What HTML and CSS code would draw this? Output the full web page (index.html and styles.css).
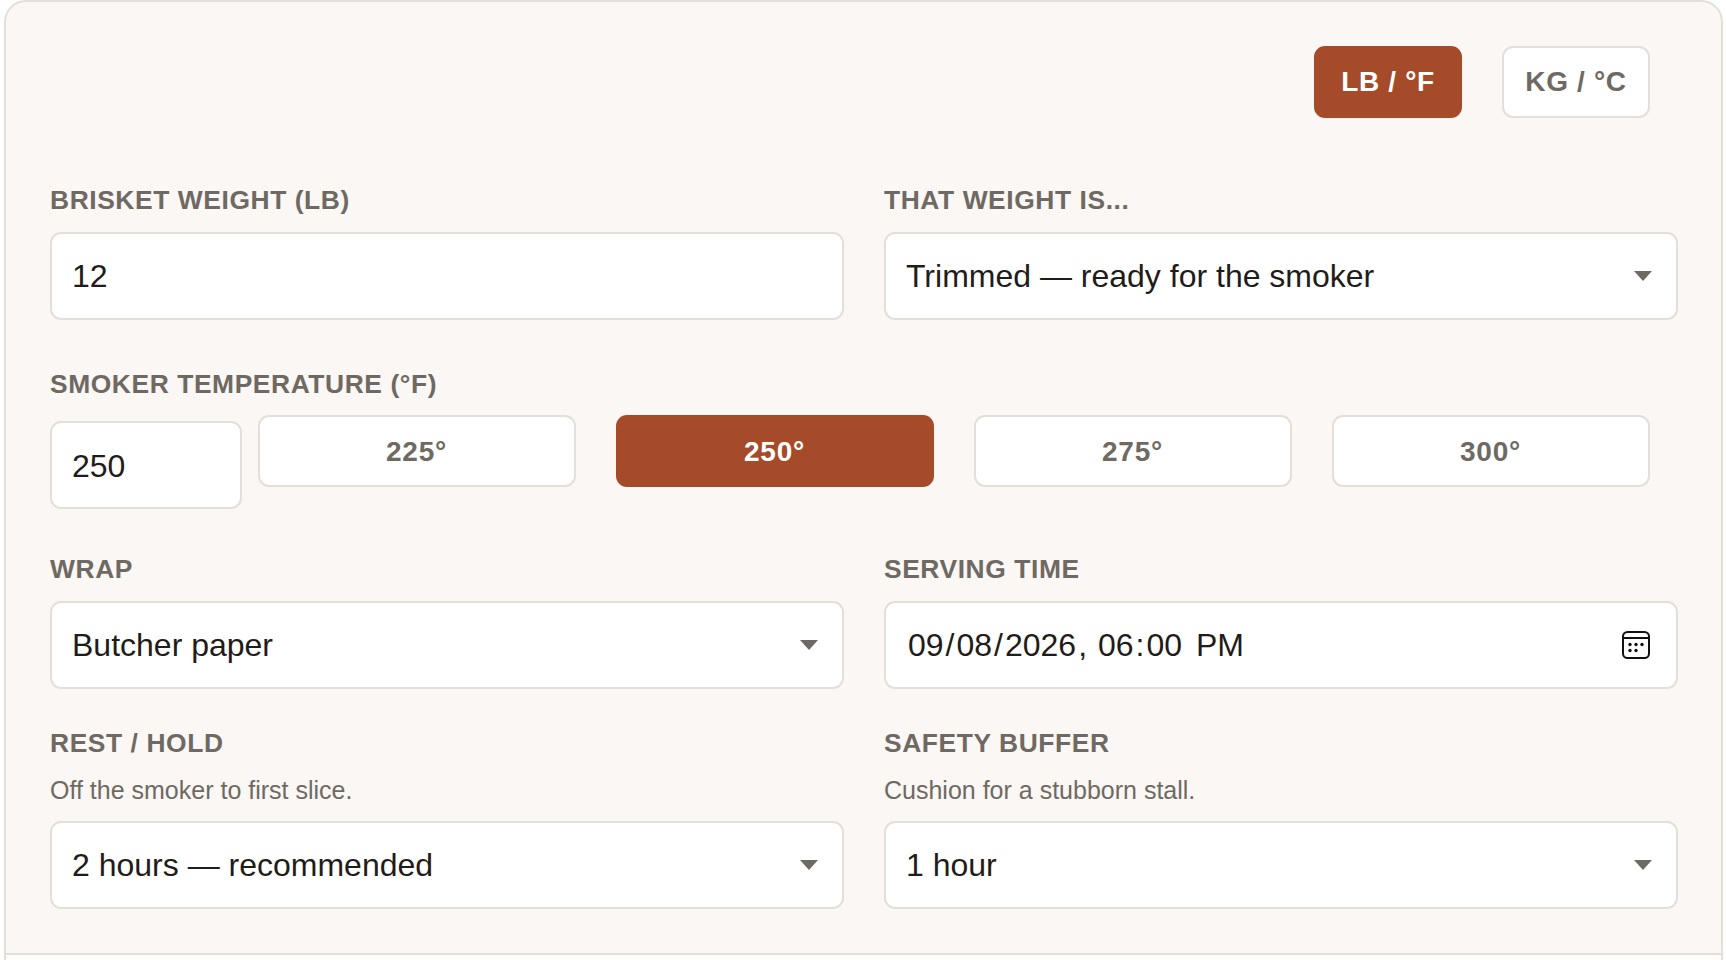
FILE: index.html
```html
<!DOCTYPE html>
<html lang="en">
<head>
<meta charset="utf-8">
<title>Brisket planner</title>
<link rel="stylesheet" href="styles.css">
</head>
<body>
<main class="card">
  <div class="form">
    <div class="units">
      <button class="pill pill-on">LB / °F</button>
      <button class="pill">KG / °C</button>
    </div>
    <div class="row row-first">
      <div class="field">
        <label class="label">BRISKET WEIGHT (LB)</label>
        <input class="control" type="text" value="12">
      </div>
      <div class="field">
        <label class="label">THAT WEIGHT IS...</label>
        <div class="select-wrap">
          <select class="control"><option>Trimmed — ready for the smoker</option></select>
          <span class="caret"></span>
        </div>
      </div>
    </div>
    <div class="temp">
      <label class="label">SMOKER TEMPERATURE (°F)</label>
      <div class="temp-row">
        <input class="control temp-input" type="text" value="250">
        <div class="chips">
          <button class="chip">225°</button>
          <button class="chip chip-on">250°</button>
          <button class="chip">275°</button>
          <button class="chip">300°</button>
        </div>
      </div>
    </div>
    <div class="row row-wrap">
      <div class="field">
        <label class="label">WRAP</label>
        <div class="select-wrap">
          <select class="control"><option>Butcher paper</option></select>
          <span class="caret"></span>
        </div>
      </div>
      <div class="field">
        <label class="label">SERVING TIME</label>
        <div class="select-wrap">
          <input class="control date" type="datetime-local" value="2026-09-08T18:00">
          <svg class="cal" viewBox="0 0 28 28" fill="none">
            <rect x="1" y="1" width="26" height="26" rx="4.5" stroke="#111" stroke-width="2"/>
            <path d="M1.5 7h25" stroke="#111" stroke-width="2"/>
            <g fill="#111"><circle cx="8" cy="13.5" r="1.7"/><circle cx="14" cy="13.5" r="1.7"/><circle cx="20" cy="13.5" r="1.7"/><circle cx="8" cy="19.5" r="1.7"/><circle cx="14" cy="19.5" r="1.7"/></g>
          </svg>
        </div>
      </div>
    </div>
    <div class="row row-rest">
      <div class="field">
        <label class="label">REST / HOLD</label>
        <p class="hint">Off the smoker to first slice.</p>
        <div class="select-wrap">
          <select class="control"><option>2 hours — recommended</option></select>
          <span class="caret"></span>
        </div>
      </div>
      <div class="field">
        <label class="label">SAFETY BUFFER</label>
        <p class="hint">Cushion for a stubborn stall.</p>
        <div class="select-wrap">
          <select class="control"><option>1 hour</option></select>
          <span class="caret"></span>
        </div>
      </div>
    </div>
  </div>
  <div class="below"></div>
</main>
</body>
</html>
```
FILE: styles.css
```css
* { box-sizing: border-box; }
html, body { height: 100%; }
body {
  margin: 0;
  padding: 0 3px 0 4px;
  background: #fff;
  font-family: "Liberation Sans", Arial, sans-serif;
  overflow: hidden;
}
.card {
  height: 980px;
  background: #fbf7f4;
  border: 2px solid #e4dfd8;
  border-radius: 22px;
  overflow: hidden;
}
.form {
  height: 951px;
  padding: 44px 43px 0 44px;
}
.below {
  height: 40px;
  background: #fffdfc;
  border-top: 2px solid #e4dfd8;
}
.units {
  display: flex;
  justify-content: flex-end;
  gap: 40px;
  padding-right: 28px;
}
button { font-family: inherit; cursor: pointer; }
.pill {
  width: 148px;
  height: 72px;
  border: 2px solid #e4dfd8;
  border-radius: 11px;
  background: #fff;
  color: #6e6a63;
  font-size: 28px;
  font-weight: 700;
  letter-spacing: 0.65px;
}
.row {
  display: grid;
  grid-template-columns: 1fr 1fr;
  gap: 40px;
}
.row-first { margin-top: 67px; }
.row-wrap { margin-top: 45px; }
.row-rest { margin-top: 39px; }
.temp { margin-top: 49px; }
.label {
  display: block;
  height: 30px;
  margin-bottom: 17px;
  line-height: 30px;
  font-size: 26.4px;
  font-weight: 700;
  letter-spacing: 0.58px;
  color: #6e6a63;
}
.temp .label { margin-bottom: 16px; }
.hint {
  margin: 1.3px 0 16px;
  height: 30px;
  line-height: 30px;
  font-size: 25px;
  color: #6e6a63;
}
.control {
  display: block;
  width: 100%;
  height: 88px;
  padding: 0 22px 0 20px;
  border: 2px solid #e4dfd8;
  border-radius: 11px;
  background: #fff;
  color: #1f1c1a;
  font-family: inherit;
  font-size: 32px;
  appearance: none;
  outline: none;
}
.select-wrap { position: relative; }
.caret {
  position: absolute;
  top: 39px;
  right: 26px;
  width: 0;
  height: 0;
  border-left: 9px solid transparent;
  border-right: 9px solid transparent;
  border-top: 10px solid #6e6a63;
  pointer-events: none;
}
.date { padding-left: 21px; }
.date::-webkit-calendar-picker-indicator { opacity: 0; }
.date::-webkit-datetime-edit-text { padding: 0 1px; }
.date::-webkit-datetime-edit-ampm-field { margin-left: 3.6px; }
.cal {
  position: absolute;
  top: 30px;
  right: 28px;
  width: 28px;
  height: 28px;
  pointer-events: none;
}
.temp-row {
  display: flex;
  align-items: flex-start;
  gap: 15.5px;
}
.temp-input {
  flex: none;
  width: 192px;
  margin-top: 6px;
  padding-top: 2px;
}
.chips {
  flex: 1;
  display: grid;
  grid-template-columns: repeat(4, 1fr);
  gap: 40px;
  padding-right: 28.5px;
}
.chip {
  height: 72px;
  padding-top: 3px;
  border: 2px solid #e4dfd8;
  border-radius: 11px;
  background: #fff;
  color: #6e6a63;
  font-size: 28px;
  font-weight: 700;
  letter-spacing: 0.8px;
}
.pill-on, .chip-on {
  background: #a64b2a;
  border-color: #a64b2a;
  color: #fff;
}
```
